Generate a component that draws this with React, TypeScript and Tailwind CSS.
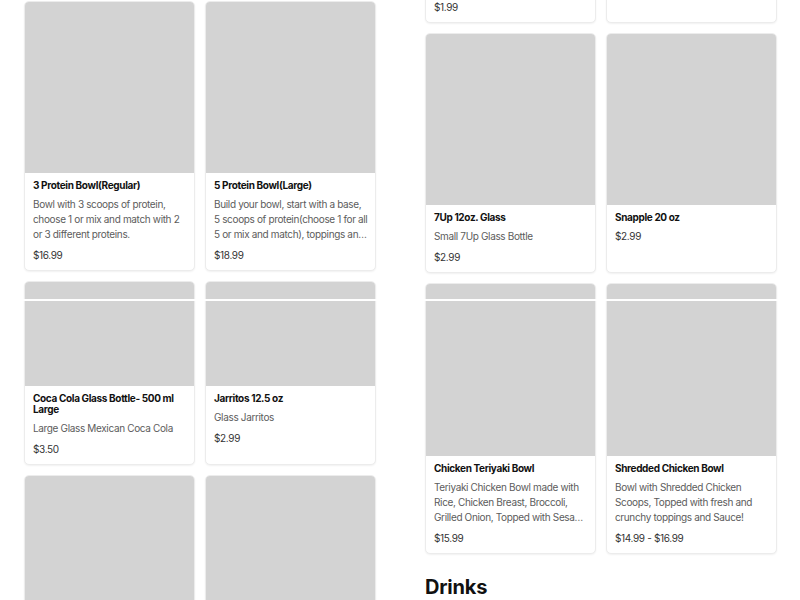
import React from "react";

type Item = {
  name: string;
  desc?: string;
  price: string;
  img: string;
};

// left column, top to bottom
const LEFT_ROWS: Item[][] = [
  [
    {
      name: "3 Protein Bowl(Regular)",
      desc: "Bowl with 3 scoops of protein, choose 1 or mix and match with 2 or 3 different proteins.",
      price: "$16.99",
      img: "h-[171px]",
    },
    {
      name: "5 Protein Bowl(Large)",
      desc: "Build your bowl, start with a base, 5 scoops of protein(choose 1 for all 5 or mix and match), toppings and sauce of your choice.",
      price: "$18.99",
      img: "h-[171px]",
    },
  ],
  [
    {
      name: "Coca Cola Glass Bottle- 500 ml Large",
      desc: "Large Glass Mexican Coca Cola",
      price: "$3.50",
      img: "h-[104px]",
    },
    { name: "Jarritos 12.5 oz", desc: "Glass Jarritos", price: "$2.99", img: "h-[104px]" },
  ],
  [
    { name: "Sprite Glass Bottle", desc: "Glass Mexican Sprite", price: "$2.99", img: "h-[171px]" },
    { name: "Fanta Glass Bottle", desc: "Glass Mexican Fanta", price: "$2.99", img: "h-[171px]" },
  ],
];

const RIGHT_ROWS: Item[][] = [
  [
    { name: "Coca Cola Can", desc: "12 oz can", price: "$1.99", img: "h-[171px]" },
    { name: "Bottled Water", price: "$1.49", img: "h-[150px]" },
  ],
  [
    { name: "7Up 12oz. Glass", desc: "Small 7Up Glass Bottle", price: "$2.99", img: "h-[171px]" },
    { name: "Snapple 20 oz", price: "$2.99", img: "h-[171px]" },
  ],
  [
    {
      name: "Chicken Teriyaki Bowl",
      desc: "Teriyaki Chicken Bowl made with Rice, Chicken Breast, Broccoli, Grilled Onion, Topped with Sesame Seeds and Teriyaki Sauce.",
      price: "$15.99",
      img: "h-[172px]",
    },
    {
      name: "Shredded Chicken Bowl",
      desc: "Bowl with Shredded Chicken Scoops, Topped with fresh and crunchy toppings and Sauce!",
      price: "$14.99 - $16.99",
      img: "h-[172px]",
    },
  ],
];

function Card({ item }: { item: Item }) {
  return (
    <div className="flex flex-col overflow-hidden rounded-[5px] border border-[#ececec] bg-white shadow-[0_1px_2px_rgba(0,0,0,0.06)]">
      <div className={`${item.img} shrink-0 bg-[#d3d3d3]`} />
      <div className="flex flex-col gap-[6px] pl-[8px] pr-[6px] pt-[7px] pb-[7px] tracking-[-0.35px]">
        <h3 className="text-[10px] font-bold leading-[11px] text-[#111]">{item.name}</h3>
        {item.desc && (
          <p className="line-clamp-3 text-[10px] leading-[15px] text-[#5c5c5c]">{item.desc}</p>
        )}
        <div className="text-[10px] leading-[15px] text-[#333]">{item.price}</div>
      </div>
    </div>
  );
}

function Column({ rows }: { rows: Item[][] }) {
  return (
    <div className="flex w-[352px] shrink-0 flex-col gap-[10px]">
      {rows.map((row, i) => (
        <div key={i} className="grid grid-cols-2 gap-[10px]">
          {row.map((item) => (
            <Card key={item.name} item={item} />
          ))}
        </div>
      ))}
    </div>
  );
}

export default function App() {
  return (
    <div className="relative h-[600px] w-[800px] overflow-hidden bg-white font-['Inter',sans-serif]">
      <div className="flex gap-[49px] px-[24px] pt-[1px]">
        <Column rows={LEFT_ROWS} />
        <div className="-mt-[218px] flex flex-col">
          <Column rows={RIGHT_ROWS} />
          <h2 className="mt-[19px] text-[20px] font-bold leading-[28px] tracking-[-0.01em] text-[#111]">
            Drinks
          </h2>
        </div>
      </div>
      {/* edge of the sticky category bar */}
      <div className="pointer-events-none absolute left-0 right-0 top-[299px] h-[2px] bg-white" />
    </div>
  );
}
